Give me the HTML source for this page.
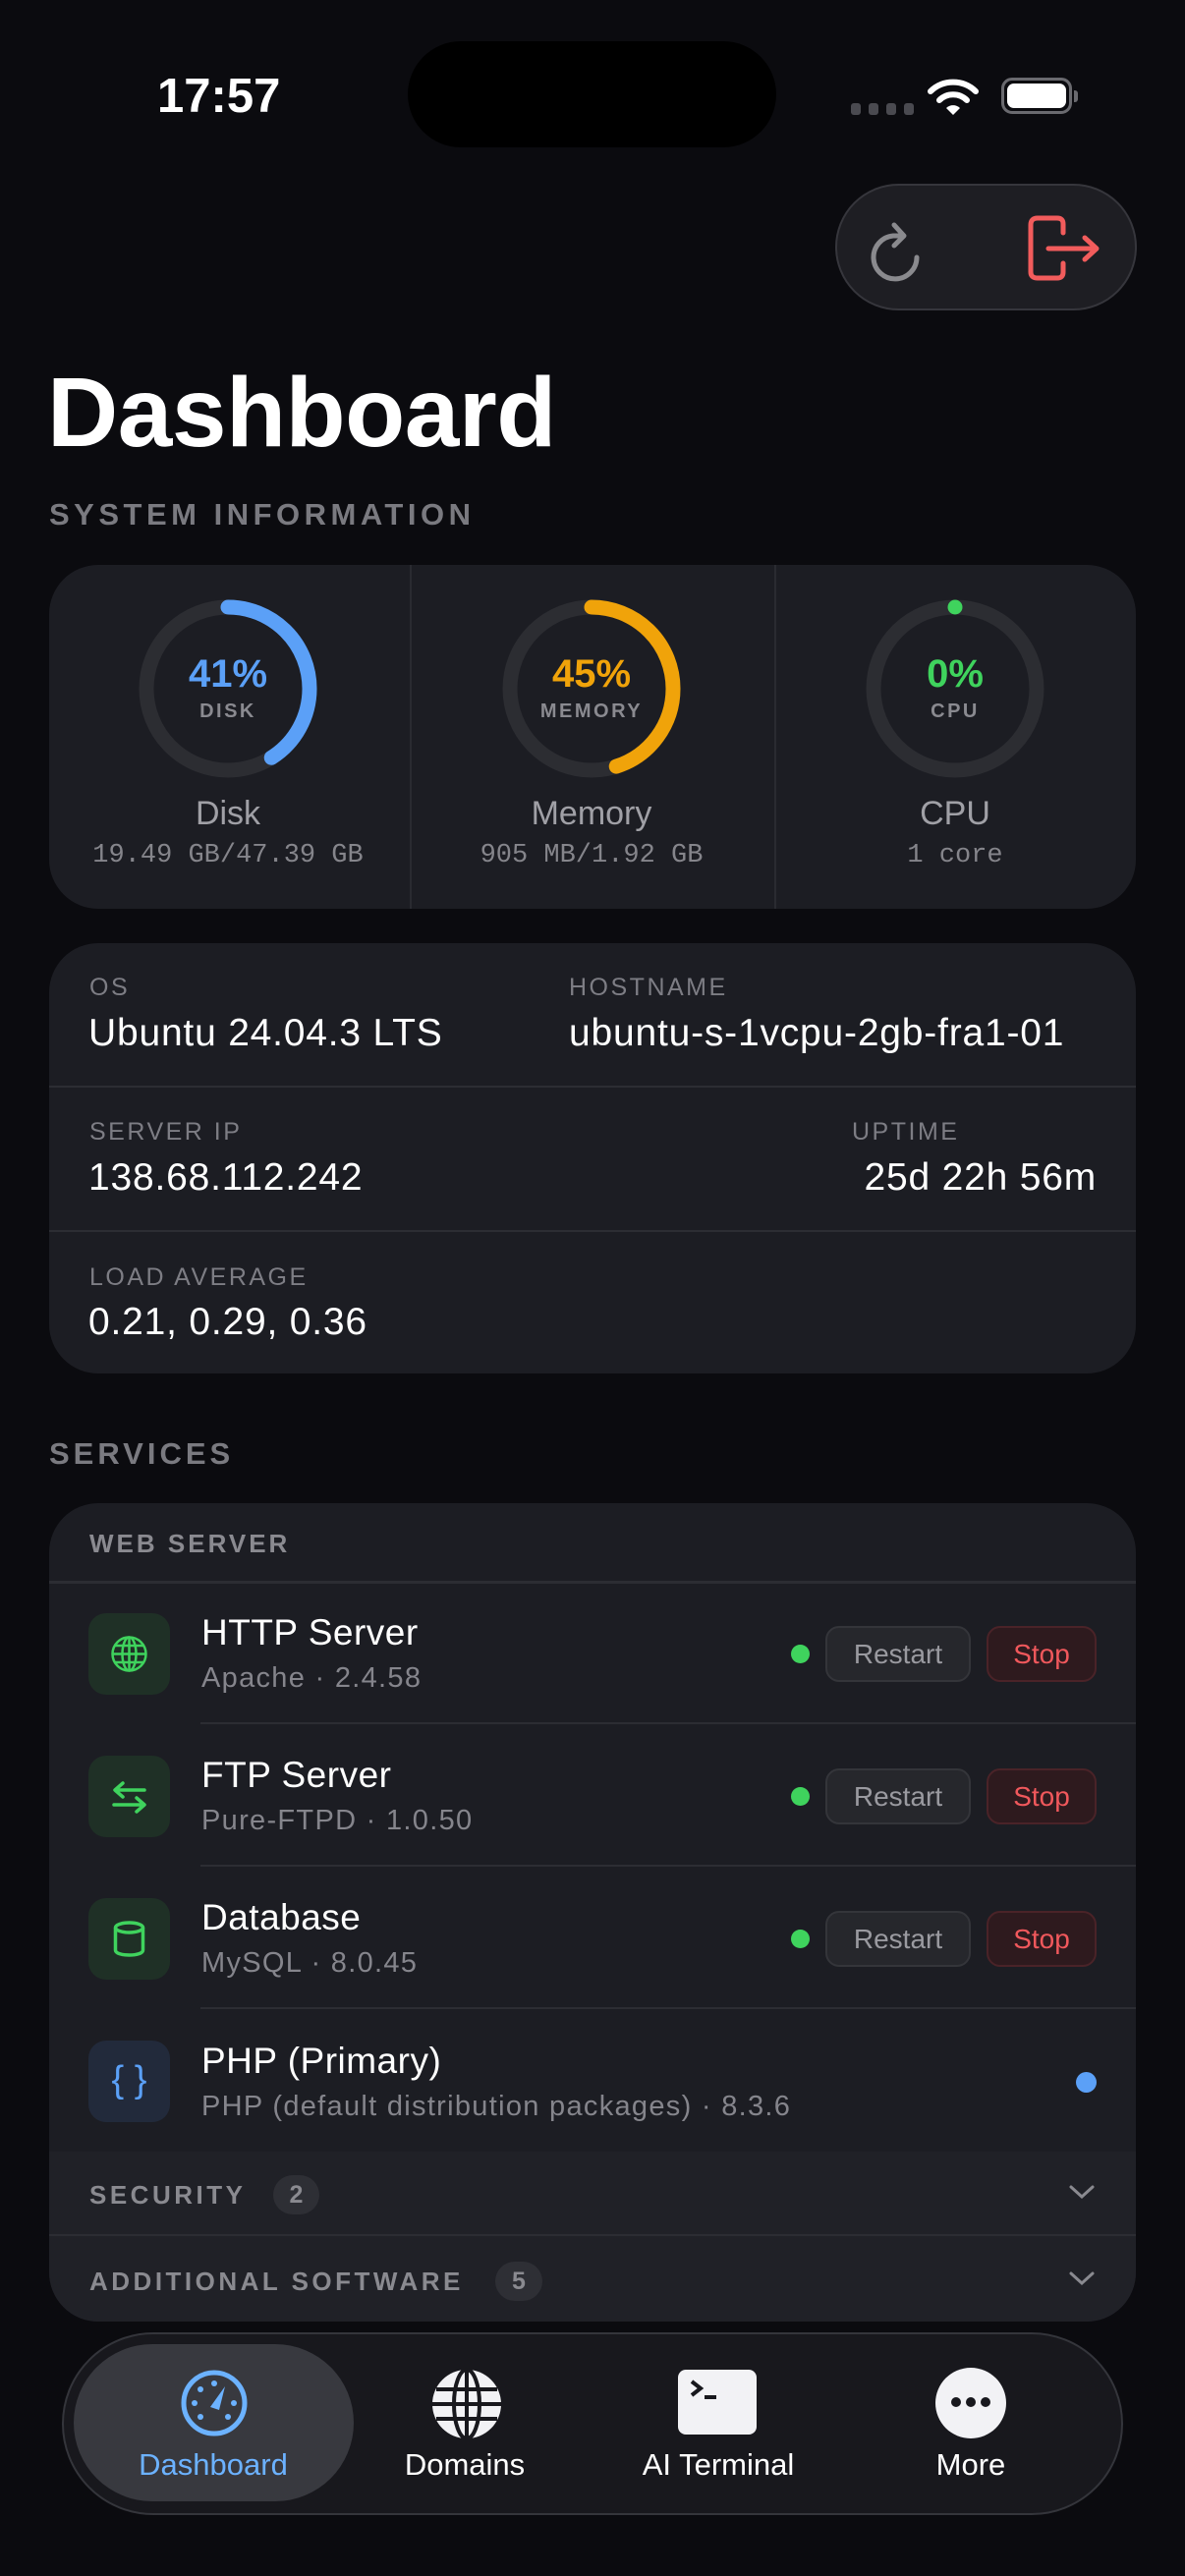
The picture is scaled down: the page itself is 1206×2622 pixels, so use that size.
<!DOCTYPE html>
<html><head><meta charset="utf-8"><style>
*{margin:0;padding:0;box-sizing:border-box}
body{width:1206px;height:2622px;background:#0b0b0f;position:relative;overflow:hidden;font-family:"Liberation Sans",sans-serif;color:#fff}
.a{position:absolute;white-space:nowrap}
.card{position:absolute;background:#1c1d23;border-radius:50px;overflow:hidden}
.lbl{color:#7d7d84;font-size:25px;letter-spacing:2.5px}
.val{color:#fff;font-size:39px;letter-spacing:0.8px}
.hl{position:absolute;height:2px;background:#2c2d33}
.ic{position:absolute;left:90px;width:83px;height:83px;border-radius:18px;background:#1f3026}
.t{font-size:37px;color:#fff;left:205px;letter-spacing:0.5px}
.s{font-size:29px;color:#85858c;left:205px;letter-spacing:1.3px}
.dot{position:absolute;left:805px;width:19px;height:19px;border-radius:50%;background:#3fd35d}
.rb{position:absolute;left:840px;width:148px;height:57px;border-radius:14px;background:#26272c;border:2px solid #34353a;color:#9a9aa0;font-size:28px;text-align:center;line-height:53px}
.sb{position:absolute;left:1004px;width:112px;height:57px;border-radius:14px;background:#2e1a1e;border:2px solid #4a2328;color:#f0585c;font-size:28px;text-align:center;line-height:53px}
.tab{position:absolute;font-size:31px;text-align:center;width:240px}
</style></head><body>
<div class="a" style="left:160px;top:70px;font-size:49px;font-weight:bold;line-height:56px">17:57</div>
<div class="a" style="left:415px;top:42px;width:375px;height:108px;border-radius:54px;background:#000"></div>
<div class="a" style="left:866px;top:105px;width:10px;height:12px;border-radius:3px;background:#4a4a50"></div>
<div class="a" style="left:884px;top:105px;width:10px;height:12px;border-radius:3px;background:#4a4a50"></div>
<div class="a" style="left:902px;top:105px;width:10px;height:12px;border-radius:3px;background:#4a4a50"></div>
<div class="a" style="left:920px;top:105px;width:10px;height:12px;border-radius:3px;background:#4a4a50"></div>
<svg class="a" style="left:944px;top:78px" width="52" height="40" viewBox="0 0 52 40"><path d="M3 15 A33 33 0 0 1 49 15" stroke="#fff" stroke-width="6" fill="none" stroke-linecap="round"/><path d="M12 24 A20 20 0 0 1 40 24" stroke="#fff" stroke-width="6" fill="none" stroke-linecap="round"/><path d="M19 32 L26 39 L33 32 A10 10 0 0 0 19 32Z" fill="#fff"/></svg>
<div class="a" style="left:1019px;top:79px;width:72px;height:37px;border-radius:11px;border:3px solid #6a6a6f"></div>
<div class="a" style="left:1025px;top:85px;width:60px;height:25px;border-radius:7px;background:#fff"></div>
<div class="a" style="left:1093px;top:92px;width:4px;height:12px;border-radius:0 3px 3px 0;background:#6a6a6f"></div>

<div class="a" style="left:850px;top:187px;width:307px;height:129px;border-radius:65px;background:#1e1e23;border:2px solid #36363c"></div>
<svg class="a" style="left:882px;top:218px" width="66" height="70" viewBox="0 0 66 70"><path d="M51 44 A22 22 0 1 1 27 22 L36 22" stroke="#8a8a8e" stroke-width="5" fill="none" stroke-linecap="round"/><path d="M28 11 L38 22 L28 32" stroke="#8a8a8e" stroke-width="5" fill="none" stroke-linecap="round" stroke-linejoin="round"/></svg>
<svg class="a" style="left:1040px;top:215px" width="86" height="75" viewBox="0 0 86 75"><path d="M42 22 L42 13 Q42 7 36 7 L16 7 Q9 7 9 14 L9 62 Q9 68 16 68 L36 68 Q42 68 42 62 L42 53" stroke="#f25c5c" stroke-width="5" fill="none" stroke-linecap="round"/><path d="M27 38 L75 38 M64 27 L76 38 L64 49" stroke="#f25c5c" stroke-width="5" fill="none" stroke-linecap="round" stroke-linejoin="round"/></svg>

<div class="a" style="left:48px;top:365px;font-size:100px;font-weight:bold;line-height:110px;letter-spacing:-0.5px">Dashboard</div>
<div class="a" style="left:50px;top:506px;font-size:31px;letter-spacing:4.5px;font-weight:bold;line-height:36px;color:#7a7a80">SYSTEM INFORMATION</div>

<div class="card" style="left:50px;top:575px;width:1106px;height:350px">
<div style="position:absolute;left:367px;top:0;width:2px;height:350px;background:#2a2b31"></div>
<div style="position:absolute;left:738px;top:0;width:2px;height:350px;background:#2a2b31"></div>
</div>
<svg class="a" style="left:0;top:575px" width="1206" height="350">
<g fill="none" stroke-width="15">
<circle cx="232" cy="126" r="83" stroke="#2c2d32"/>
<circle cx="602" cy="126" r="83" stroke="#2c2d32"/>
<circle cx="972" cy="126" r="83" stroke="#2c2d32"/>
<circle cx="232" cy="126" r="83" stroke="#5ba0f7" stroke-dasharray="214 600" stroke-linecap="round" transform="rotate(-90 232 126)"/>
<circle cx="602" cy="126" r="83" stroke="#f0a30a" stroke-dasharray="235 600" stroke-linecap="round" transform="rotate(-90 602 126)"/>
</g>
<circle cx="972" cy="43" r="7.5" fill="#3fd35d"/>
</svg>
<div class="a" style="left:132px;top:663px;width:200px;text-align:center;font-size:40px;font-weight:bold;color:#5ba0f7;line-height:46px">41%</div>
<div class="a" style="left:132px;top:712px;width:200px;text-align:center;font-size:20px;font-weight:bold;color:#8a8a90;letter-spacing:2.5px;line-height:24px">DISK</div>
<div class="a" style="left:502px;top:663px;width:200px;text-align:center;font-size:40px;font-weight:bold;color:#f0a30a;line-height:46px">45%</div>
<div class="a" style="left:502px;top:712px;width:200px;text-align:center;font-size:20px;font-weight:bold;color:#8a8a90;letter-spacing:2.5px;line-height:24px">MEMORY</div>
<div class="a" style="left:872px;top:663px;width:200px;text-align:center;font-size:40px;font-weight:bold;color:#3fd35d;line-height:46px">0%</div>
<div class="a" style="left:872px;top:712px;width:200px;text-align:center;font-size:20px;font-weight:bold;color:#8a8a90;letter-spacing:2.5px;line-height:24px">CPU</div>
<div class="a" style="left:82px;top:807px;width:300px;text-align:center;font-size:34px;color:#a0a0a6;line-height:42px">Disk</div>
<div class="a" style="left:32px;top:855px;width:400px;text-align:center;font-size:27px;color:#85858b;font-family:'Liberation Mono',monospace;line-height:32px">19.49 GB/47.39 GB</div>
<div class="a" style="left:452px;top:807px;width:300px;text-align:center;font-size:34px;color:#a0a0a6;line-height:42px">Memory</div>
<div class="a" style="left:402px;top:855px;width:400px;text-align:center;font-size:27px;color:#85858b;font-family:'Liberation Mono',monospace;line-height:32px">905 MB/1.92 GB</div>
<div class="a" style="left:822px;top:807px;width:300px;text-align:center;font-size:34px;color:#a0a0a6;line-height:42px">CPU</div>
<div class="a" style="left:772px;top:855px;width:400px;text-align:center;font-size:27px;color:#85858b;font-family:'Liberation Mono',monospace;line-height:32px">1 core</div>

<div class="card" style="left:50px;top:960px;width:1106px;height:438px"></div>
<div class="hl" style="left:50px;top:1105px;width:1106px"></div>
<div class="hl" style="left:50px;top:1252px;width:1106px"></div>
<div class="a lbl" style="left:91px;top:990px;line-height:30px">OS</div>
<div class="a val" style="left:90px;top:1030px;line-height:44px">Ubuntu 24.04.3 LTS</div>
<div class="a lbl" style="left:579px;top:990px;line-height:30px">HOSTNAME</div>
<div class="a val" style="left:579px;top:1030px;line-height:44px">ubuntu-s-1vcpu-2gb-fra1-01</div>
<div class="a lbl" style="left:91px;top:1137px;line-height:30px">SERVER IP</div>
<div class="a val" style="left:90px;top:1177px;line-height:44px">138.68.112.242</div>
<div class="a lbl" style="left:867px;top:1137px;line-height:30px">UPTIME</div>
<div class="a val" style="right:90px;top:1177px;line-height:44px">25d 22h 56m</div>
<div class="a lbl" style="left:91px;top:1285px;line-height:30px">LOAD AVERAGE</div>
<div class="a val" style="left:90px;top:1324px;line-height:44px">0.21, 0.29, 0.36</div>

<div class="a" style="left:50px;top:1462px;font-size:31px;letter-spacing:4px;font-weight:bold;line-height:36px;color:#7a7a80">SERVICES</div>

<div class="card" style="left:50px;top:1530px;width:1106px;height:833px">
<div style="position:absolute;left:0;top:660px;width:1106px;height:173px;background:#202127"></div>
</div>
<div class="a" style="left:91px;top:1556px;font-size:26px;letter-spacing:3px;font-weight:bold;color:#8a8a90;line-height:30px">WEB SERVER</div>
<div class="hl" style="left:50px;top:1609px;width:1106px;height:3px"></div>
<div class="hl" style="left:204px;top:1753px;width:952px"></div>
<div class="hl" style="left:204px;top:1898px;width:952px"></div>
<div class="hl" style="left:204px;top:2043px;width:952px"></div>
<div class="hl" style="left:50px;top:2274px;width:1106px"></div>

<div class="ic" style="top:1642px"><svg width="83" height="83" viewBox="0 0 83 83" fill="none" stroke="#3fd35d" stroke-width="2.5"><circle cx="41.5" cy="41.5" r="17"/><ellipse cx="41.5" cy="41.5" rx="7" ry="17"/><path d="M24.5 41.5h34M41.5 24.5v34M27 33h29M27 50h29"/></svg></div>
<div class="a t" style="top:1640px;line-height:44px">HTTP Server</div>
<div class="a s" style="top:1690px;line-height:36px">Apache · 2.4.58</div>
<div class="dot" style="top:1674px"></div><div class="rb" style="top:1655px">Restart</div><div class="sb" style="top:1655px">Stop</div>

<div class="ic" style="top:1787px"><svg width="83" height="83" viewBox="0 0 83 83" fill="none" stroke="#3fd35d" stroke-width="3.5" stroke-linecap="round" stroke-linejoin="round"><path d="M57 35H28M35 28l-8 7 8 7M26 50h30M49 43l8 7-8 7"/></svg></div>
<div class="a t" style="top:1785px;line-height:44px">FTP Server</div>
<div class="a s" style="top:1835px;line-height:36px">Pure-FTPD · 1.0.50</div>
<div class="dot" style="top:1819px"></div><div class="rb" style="top:1800px">Restart</div><div class="sb" style="top:1800px">Stop</div>

<div class="ic" style="top:1932px"><svg width="83" height="83" viewBox="0 0 83 83" fill="none" stroke="#3fd35d" stroke-width="3.5"><ellipse cx="41.5" cy="30" rx="14" ry="5"/><path d="M27.5 30v23c0 3 6 5 14 5s14-2 14-5V30"/></svg></div>
<div class="a t" style="top:1930px;line-height:44px">Database</div>
<div class="a s" style="top:1980px;line-height:36px">MySQL · 8.0.45</div>
<div class="dot" style="top:1964px"></div><div class="rb" style="top:1945px">Restart</div><div class="sb" style="top:1945px">Stop</div>

<div class="ic" style="top:2077px;background:#222a3b;color:#5ba0f7;font-size:38px;text-align:center;line-height:80px">{ }</div>
<div class="a t" style="top:2076px;line-height:44px">PHP (Primary)</div>
<div class="a s" style="top:2126px;line-height:36px">PHP (default distribution packages) · 8.3.6</div>
<div class="a" style="left:1095px;top:2109px;width:21px;height:21px;border-radius:50%;background:#5ba0f7"></div>

<div class="a" style="left:91px;top:2219px;font-size:26px;letter-spacing:3.5px;font-weight:bold;color:#8a8a90;line-height:30px">SECURITY</div>
<div class="a" style="left:278px;top:2214px;width:47px;height:40px;border-radius:20px;background:#2e2f35;color:#8a8a90;font-size:25px;text-align:center;line-height:40px;font-weight:bold">2</div>
<svg class="a" style="left:1087px;top:2222px" width="28" height="18"><path d="M3 4l11 10 11-10" stroke="#8a8a90" stroke-width="3" fill="none" stroke-linecap="round"/></svg>
<div class="a" style="left:91px;top:2307px;font-size:26px;letter-spacing:3.5px;font-weight:bold;color:#8a8a90;line-height:30px">ADDITIONAL SOFTWARE</div>
<div class="a" style="left:504px;top:2302px;width:48px;height:40px;border-radius:20px;background:#2e2f35;color:#8a8a90;font-size:25px;text-align:center;line-height:40px;font-weight:bold">5</div>
<svg class="a" style="left:1087px;top:2310px" width="28" height="18"><path d="M3 4l11 10 11-10" stroke="#8a8a90" stroke-width="3" fill="none" stroke-linecap="round"/></svg>

<div class="a" style="left:63px;top:2374px;width:1080px;height:186px;border-radius:93px;background:#18181d;border:2px solid #34353b"></div>
<div class="a" style="left:75px;top:2386px;width:285px;height:160px;border-radius:80px;background:#38393f"></div>
<svg class="a" style="left:182px;top:2410px" width="72" height="72" viewBox="0 0 72 72"><circle cx="36" cy="36" r="31" stroke="#6cb2ff" stroke-width="5" fill="none"/><g fill="#6cb2ff"><circle cx="36" cy="16" r="3"/><circle cx="22" cy="22" r="3"/><circle cx="16" cy="36" r="3"/><circle cx="56" cy="36" r="3"/><circle cx="22" cy="50" r="3"/><circle cx="50" cy="50" r="3"/><path d="M32 40 L47 19 L41 43 Z"/></g></svg>
<div class="tab" style="left:97px;top:2489px;color:#6cb2ff;line-height:40px">Dashboard</div>
<svg class="a" style="left:438px;top:2410px" width="74" height="74" viewBox="0 0 74 74"><circle cx="37" cy="37" r="35" fill="#f2f2f5"/><g stroke="#18181d" stroke-width="4" fill="none"><ellipse cx="37" cy="37" rx="13" ry="35"/><path d="M37 2v70M2 37h70M6 22h62M6 52h62"/></g></svg>
<div class="tab" style="left:353px;top:2489px;line-height:40px">Domains</div>
<div class="a" style="left:690px;top:2412px;width:80px;height:66px;border-radius:8px;background:#f2f2f5"></div>
<svg class="a" style="left:700px;top:2420px" width="40" height="30"><path d="M4 4l9 7-9 7M17 20h12" stroke="#18181d" stroke-width="4" fill="none"/></svg>
<div class="tab" style="left:611px;top:2489px;line-height:40px">AI Terminal</div>
<div class="a" style="left:952px;top:2410px;width:72px;height:72px;border-radius:50%;background:#f2f2f5"></div>
<div class="a" style="left:968px;top:2440px;width:10px;height:10px;border-radius:50%;background:#18181d"></div>
<div class="a" style="left:983px;top:2440px;width:10px;height:10px;border-radius:50%;background:#18181d"></div>
<div class="a" style="left:998px;top:2440px;width:10px;height:10px;border-radius:50%;background:#18181d"></div>
<div class="tab" style="left:868px;top:2489px;line-height:40px">More</div>
</body></html>
